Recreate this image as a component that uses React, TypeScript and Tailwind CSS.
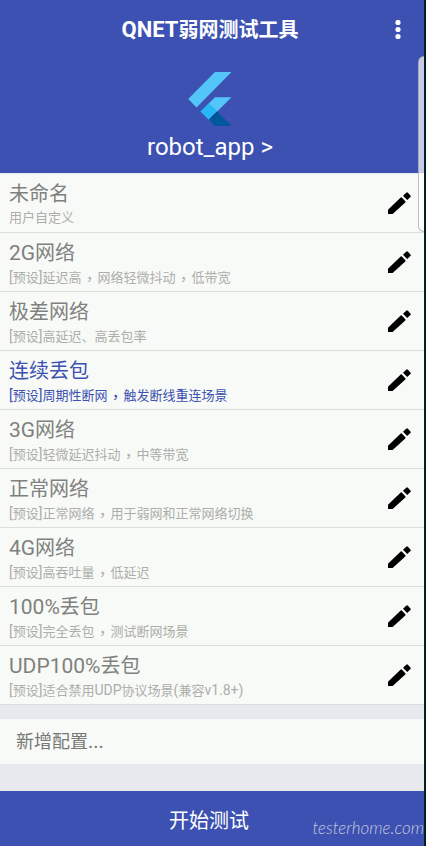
type Profile = {
  name: string;
  desc: string;
};

const profiles: Profile[] = [
  { name: "未命名", desc: "用户自定义" },
  { name: "2G网络", desc: "[预设]延迟高，网络轻微抖动，低带宽" },
  { name: "极差网络", desc: "[预设]高延迟、高丢包率" },
  { name: "连续丢包", desc: "[预设]周期性断网，触发断线重连场景" },
  { name: "3G网络", desc: "[预设]轻微延迟抖动，中等带宽" },
  { name: "正常网络", desc: "[预设]正常网络，用于弱网和正常网络切换" },
  { name: "4G网络", desc: "[预设]高吞吐量，低延迟" },
  { name: "100%丢包", desc: "[预设]完全丢包，测试断网场景" },
  { name: "UDP100%丢包", desc: "[预设]适合禁用UDP协议场景(兼容v1.8+)" },
];

const selected = "连续丢包";

export default function App() {
  return (
    <div className="relative flex min-h-screen flex-col border-r-2 border-[#05211f] bg-[#e8e9ee] font-['Roboto','Noto_Sans_CJK_SC',sans-serif]">
      <header className="bg-[#3c51b2] pb-2.5 text-white">
        <div className="grid h-15 grid-cols-[1fr_auto_1fr] items-center">
          <h1 className="col-start-2 pr-1 text-xl leading-6 font-bold">
            <Mixed text="QNET弱网测试工具" latin="text-[22px]" />
          </h1>
          <button type="button" aria-label="更多" className="mr-3 justify-self-end p-1">
            <MoreIcon />
          </button>
        </div>
        <a href="#app" className="flex flex-col items-center pt-3">
          <FlutterLogo />
          <span className="mt-[5px] -ml-1 text-2xl leading-8">robot_app &gt;</span>
        </a>
      </header>

      <main className="flex-1">
        <ul className="border-t border-[#e6e8f0]">
          {profiles.map((p) => (
            <Row key={p.name} profile={p} active={p.name === selected} />
          ))}
        </ul>
        <button
          type="button"
          className="mt-3.5 mb-[27px] block h-[45px] w-full bg-[#f8faf7] px-4 text-left text-lg text-[#777976]"
        >
          <Mixed text="新增配置..." latin="text-xl" />
        </button>
      </main>

      <footer className="relative bg-[#3c51b2]">
        <button type="button" className="h-[55px] w-full pt-1 pr-1.5 text-xl text-white">
          开始测试
        </button>
        <span className="pointer-events-none absolute right-0 bottom-1.5 font-['Lato',sans-serif] text-[17px] leading-6 font-light text-[#c5c9dc] italic">
          testerhome.com
        </span>
      </footer>

      {/* edge panel handle */}
      <div className="pointer-events-none absolute top-14 right-0 h-44 w-1.5 rounded-l-md border border-r-0 border-[#9ea09e]/70 bg-white/70" />
    </div>
  );
}

// Latin runs are set slightly larger than the Chinese around them,
// commas sit in the middle of their cell
function Mixed({ text, latin }: { text: string; latin: string }) {
  return (
    <>
      {text.split(/([!-~]+|，)/).map((part, i) => {
        if (part === "，") {
          return (
            <span
              key={i}
              lang="zh-TW"
              className="align-[-3px] font-['Noto_Sans_CJK_TC',sans-serif] text-base leading-none"
            >
              {part}
            </span>
          );
        }
        return (
          <span key={i} className={i % 2 ? latin : undefined}>
            {part}
          </span>
        );
      })}
    </>
  );
}

function Row({ profile, active }: { profile: Profile; active: boolean }) {
  return (
    <li className="flex h-[59px] items-center justify-between border-b border-[#dcdedc] bg-[#f8faf7] pr-[13px] pl-[9px]">
      <div className={`pt-1 ${active ? "text-[#3c51b2]" : "text-[#7f817e]"}`}>
        <div className="h-6 text-xl leading-6">
          <Mixed text={profile.name} latin="text-[21px]" />
        </div>
        <div
          className={`mt-0.5 h-5 text-[13px] leading-5 ${active ? "text-[#3c51b2]" : "text-[#acaeab]"}`}
        >
          <Mixed text={profile.desc} latin="text-sm leading-5" />
        </div>
      </div>
      <button type="button" aria-label={`编辑 ${profile.name}`}>
        <PencilIcon />
      </button>
    </li>
  );
}

function PencilIcon() {
  return (
    <svg viewBox="0 0 24 24" className="h-6 w-6" fill="#000">
      <path d="M1 18.800v4.200h4.600L18.300 11.400a.8.8 0 0 0 0-1.100L14.800 6.400a.8.8 0 0 0-1.100 0zM16 4.800l4.200 4.200 3.200-2.900a1.200 1.200 0 0 0 0-1.700L20.900 1.800a1.200 1.200 0 0 0-1.700 0z" />
    </svg>
  );
}

function MoreIcon() {
  return (
    <svg viewBox="0 0 20 20" className="h-5 w-5" fill="currentColor">
      <circle cx="10" cy="2.500" r="2.600" />
      <circle cx="10" cy="9.500" r="2.600" />
      <circle cx="10" cy="16.500" r="2.600" />
    </svg>
  );
}

function FlutterLogo() {
  return (
    <svg viewBox="0 0 44 54" className="-ml-1 h-[54px] w-11">
      <path d="M27 0h16.5L8.500 35.500 0.200 27z" fill="#54c5f8" />
      <path d="M27 25.300h16.500L29 39.800 20.700 31.500z" fill="#54c5f8" />
      <path d="M20.700 47.500 29 39.300 43.500 54H27z" fill="#01579b" />
      <path d="M12.300 39.500 20.700 31.200 29 39.500 20.700 47.800z" fill="#29b6f6" />
      <path d="M20.700 47.800 29 39.500 30 42z" fill="#063c6d" opacity="0.6" />
    </svg>
  );
}
